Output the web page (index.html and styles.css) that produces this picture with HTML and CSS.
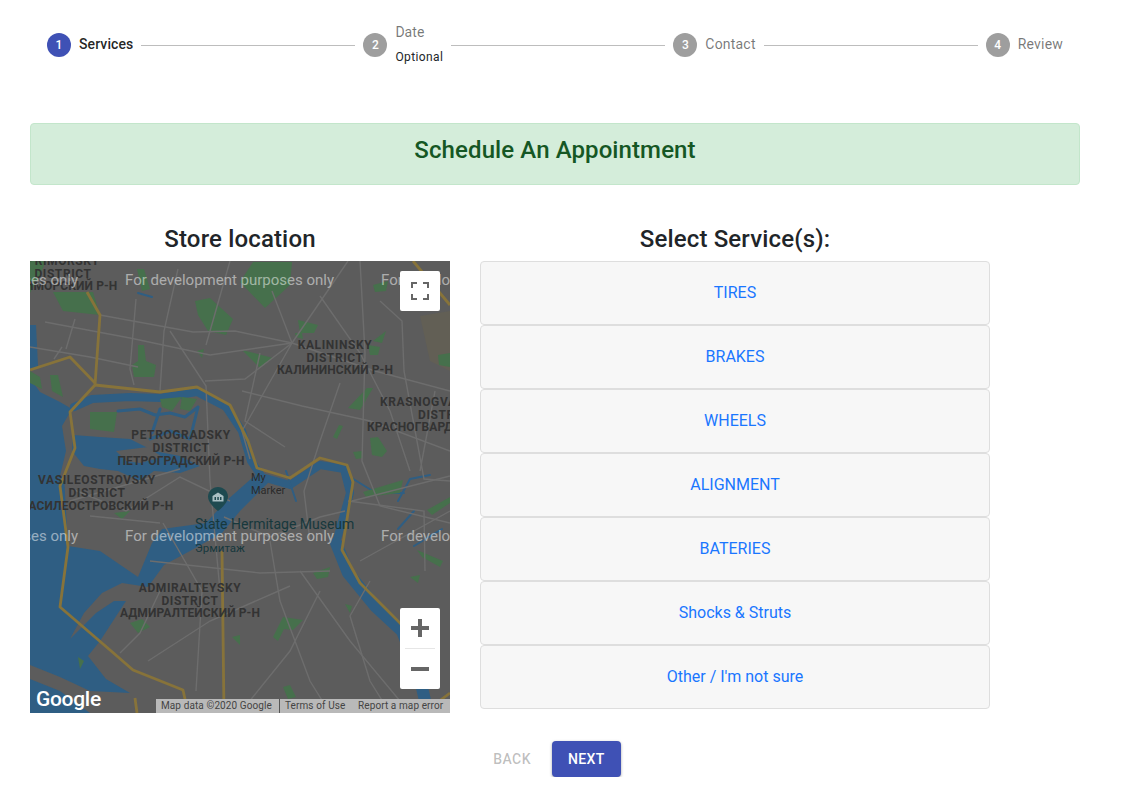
FILE: index.html
```html
<!DOCTYPE html>
<html lang="en">
<head>
<meta charset="utf-8">
<title>Schedule An Appointment</title>
<link rel="stylesheet" href="styles.css">
</head>
<body>
<main class="page">
  <nav class="stepper">
    <div class="step"><span class="step-num active">1</span><span class="step-label current">Services</span></div>
    <div class="connector"></div>
    <div class="step"><span class="step-num">2</span><span class="step-stack"><span class="step-label">Date</span><span class="step-caption">Optional</span></span></div>
    <div class="connector"></div>
    <div class="step"><span class="step-num">3</span><span class="step-label">Contact</span></div>
    <div class="connector"></div>
    <div class="step"><span class="step-num">4</span><span class="step-label">Review</span></div>
  </nav>

  <div class="content">
    <div class="banner"><h1 class="banner-title">Schedule An Appointment</h1></div>

    <div class="columns">
      <section class="col-map">
        <h2 class="col-title">Store location</h2>
        <div class="map">
          <svg class="map-svg" viewBox="0 0 420 452" width="420" height="452" xmlns="http://www.w3.org/2000/svg">
            <rect width="420" height="452" fill="#5c5c5c"/>
            <path d="M390 55L420 50 420 110 400 100Z" fill="#625f55"/>
            <!-- water -->
            <g fill="#2f5e83">
              <path d="M0 64L6 64 8 105 0 110Z"/>
              <path d="M0 117L10 131 30 141 42 148 32 165 36 190 30 215 0 215Z"/>
              <path d="M0 215H34L38 285 70 290 108 316 122 282 132 268 176 262 196 240 230 210 238 222 210 250 192 272 160 290 134 304 118 326 92 322 72 332 54 352 40 378 66 352 84 340 96 340 70 380 58 395 76 418 100 432 60 430 30 416 0 404Z"/>
              <path d="M43 174L70 176 100 178 124 190 150 195 170 205 150 212 124 210 110 220 88 210 70 208 54 205 42 190Z"/>
              <path d="M0 418L30 430 60 452H0Z"/>
            </g>
            <g fill="none" stroke="#2f5e83" stroke-linejoin="round" stroke-linecap="round">
              <path stroke-width="8" d="M44 146L62 138 100 136 130 137 167 131 196 146"/>
              <path stroke-width="8" d="M196 146L212 170 221 200 232 216 260 224 290 204 314 208 320 232 306 282"/>
              <path stroke-width="12" d="M306 282L318 312 345 345 372 370 388 410 398 452"/>
              <path stroke-width="3" d="M88 150L110 148 125 154 140 152 155 156 168 146M130 148L122 172M168 146L160 178 140 170 120 178"/>
              <path stroke-width="2" d="M50 42L66 48M108 32L122 36M320 216L346 232 374 232M368 240L380 218 400 214M368 268L384 250M384 285L412 268M256 210L266 240"/>
            </g>
            <path d="M86 190L118 186 132 196 110 202 96 200Z" fill="#5c5c5c"/>
            <!-- parks -->
            <g fill="#46704c">
              <path d="M0 0H16L8 18 0 32Z"/>
              <path d="M23 31L63 31 70 54 33 50Z"/>
              <path d="M107 8L114 8 120 28 112 30Z"/>
              <path d="M165 40L180 37 203 58 196 74 178 70 168 54Z"/>
              <path d="M108 84L114 84 116 100 126 104 124 116 104 116 102 104 108 100Z"/>
              <path d="M167 90L174 88 172 97Z"/>
              <path d="M0 110L10 116 12 128 0 122Z"/>
              <path d="M20 114L28 114 33 136 22 130Z"/>
              <path d="M60 151L87 151 84 171 60 168Z"/>
              <path d="M130 138L152 136 142 150 132 146Z"/>
              <path d="M152 136L167 138 160 150 150 148Z"/>
              <path d="M223 1L262 1 260 24 235 47 210 21Z"/>
              <path d="M268 59L288 64 284 72 270 72Z"/>
              <path d="M265 72L272 72 273 78 266 76Z"/>
              <path d="M212 89L243 97 230 107Z"/>
              <path d="M338 84L350 86 348 94 340 94Z"/>
              <path d="M343 80L356 70 352 82Z"/>
              <path d="M318 147L337 127 343 127 330 149Z"/>
              <path d="M303 176L309 164 313 165 307 178Z"/>
              <path d="M340 177L348 176 357 190 352 196 342 194Z"/>
              <path d="M323 191L332 190 333 197 326 198Z"/>
              <path d="M408 94L420 92 420 106 409 104Z"/>
              <path d="M343 24L358 20 356 30 345 31Z"/>
              <path d="M333 231L373 219 370 232 336 236Z"/>
              <path d="M397 249L420 236 420 242 402 254Z"/>
              <path d="M387 289L413 300 410 306 392 296Z"/>
              <path d="M380 316L390 314 388 322Z"/>
              <path d="M243 376L253 356 273 359 263 369 254 368 248 380Z"/>
              <path d="M283 312L300 306 298 316 287 318Z"/>
              <path d="M315 343L322 345 320 352Z"/>
              <path d="M253 426L260 424 266 436 258 438Z"/>
              <path d="M100 362L112 358 120 366 108 372Z"/>
              <path d="M202 376L210 374 210 384Z"/>
              <path d="M84 252L100 250 92 258Z"/>
              <path d="M160 442L166 446 160 452Z"/>
              <path d="M48 396L54 400 50 408Z"/>
            </g>
            <!-- roads -->
            <g fill="none" stroke="#6d6d6d" stroke-width="1.400">
              <path d="M70 54L163 71 205 70 262 82 345 110 420 130"/>
              <path d="M15 61L100 77 180 94 262 82"/>
              <path d="M0 86L60 96 108 106M32 86L24 98"/>
              <path d="M45 58L36 88M106 38L100 108 104 124M148 8L134 70 130 130"/>
              <path d="M140 70L176 125 180 220 190 330"/>
              <path d="M200 0L176 84M262 82L318 0M242 30L262 82 215 118 175 120"/>
              <path d="M262 82L212 170 220 198M290 35L330 92 360 150 380 210"/>
              <path d="M310 122L290 180 274 230 280 280"/>
              <path d="M330 0L335 92 332 200 350 245 420 262"/>
              <path d="M212 130L272 145 340 160 420 190M230 92L215 160 255 186"/>
              <path d="M350 40L372 60 374 110 394 218 420 220M405 130L390 210"/>
              <path d="M322 240L420 215M318 240L394 250 395 310M330 300L420 250"/>
              <path d="M194 256L240 276 290 256 315 250M120 300L230 312 300 310"/>
              <path d="M240 280L250 340 280 420 300 452M270 310L320 380 380 452M290 330L260 390 210 452"/>
              <path d="M42 228L96 250 150 216 200 240M40 240L150 208M60 255L130 262"/>
              <path d="M130 330L110 372 90 392M118 400L180 360 260 325M340 320L320 355 340 420 360 452"/>
              <path d="M133 262L172 330 166 430"/>
            </g>
            <!-- highways -->
            <g fill="none" stroke="#87733a" stroke-width="2.800" stroke-linejoin="round">
              <path d="M57 31L70 54 65 124 40 151 45 187 30 225 38 286 30 346 80 389 103 409 153 429 158 452"/>
              <path d="M0 109L40 96 65 122"/>
              <path d="M65 124L130 131 167 126 200 144 218 180 227 207 260 217 290 197 317 204 323 221 312 289 330 322 370 362 395 395"/>
              <path d="M383 0L420 44M105 437L107 452M393 452L420 432"/>
              <path d="M192 290L194 452"/>
            </g>
            <g class="map-label">
              <text x="33" y="4">PRIMORSKY</text><text x="33" y="17">DISTRICT</text><text x="33" y="29" class="cy">ПРИМОРСКИЙ Р-Н</text>
              <text x="305" y="88">KALININSKY</text><text x="305" y="101">DISTRICT</text><text x="305" y="113" class="cy">КАЛИНИНСКИЙ Р-Н</text>
              <text x="350" y="145" class="label-start">KRASNOGVARDEYSKY</text>
              <text x="388" y="158" class="label-start">DISTRICT</text>
              <text x="337" y="170" class="label-start cy">КРАСНОГВАРДЕЙСКИЙ Р-Н</text>
              <text x="151" y="178">PETROGRADSKY</text><text x="151" y="191">DISTRICT</text><text x="151" y="204" class="cy">ПЕТРОГРАДСКИЙ Р-Н</text>
              <text x="67" y="223">VASILEOSTROVSKY</text><text x="67" y="236">DISTRICT</text><text x="67" y="249" class="cy">ВАСИЛЕОСТРОВСКИЙ Р-Н</text>
              <text x="160" y="331">ADMIRALTEYSKY</text><text x="160" y="344">DISTRICT</text><text x="160" y="356" class="cy">АДМИРАЛТЕЙСКИЙ Р-Н</text>
            </g>
            <g class="map-poi">
              <text x="221" y="220">My</text><text x="221" y="233">Marker</text>
            </g>
            <g class="map-museum">
              <text x="165" y="268" class="museum-main">State Hermitage Museum</text>
              <text x="165" y="291">Эрмитаж</text>
            </g>
            <path d="M188 226c-5.500 0-10 4.300-10 9.700 0 6.800 10 14.300 10 14.300s10-7.500 10-14.300c0-5.400-4.500-9.700-10-9.700z" fill="#1e4a50"/>
            <path d="M182.500 235l5.500-3.500 5.500 3.500v5.500h-11zM184.500 236v3h1.500v-3zM187.300 236v3h1.500v-3zM190 236v3h1.500v-3z" fill="#a9c0c4" fill-rule="evenodd"/>
            <g class="map-dev">
              <text x="-161" y="24">For development purposes only</text><text x="95" y="24">For development purposes only</text><text x="351" y="24">For development purposes only</text>
              <text x="-161" y="280">For development purposes only</text><text x="95" y="280">For development purposes only</text><text x="351" y="280">For development purposes only</text>
            </g>
          </svg>

          <button class="map-ctl map-full" type="button" aria-label="Toggle fullscreen view">
            <svg viewBox="0 0 18 18" width="18" height="18"><path d="M0 6V0h6v2H2v4zM12 0h6v6h-2V2h-4zM18 12v6h-6v-2h4v-4zM6 18H0v-6h2v4h4z" fill="#666"/></svg>
          </button>
          <div class="map-ctl map-zoom">
            <button class="zoom-btn" type="button" aria-label="Zoom in"><svg viewBox="0 0 18 18" width="18" height="18"><path d="M7 0h4v7h7v4h-7v7H7v-7H0V7h7z" fill="#666"/></svg></button>
            <span class="zoom-sep"></span>
            <button class="zoom-btn" type="button" aria-label="Zoom out"><svg viewBox="0 0 18 18" width="18" height="18"><path d="M0 7h18v4H0z" fill="#666"/></svg></button>
          </div>
          <span class="map-logo">Google</span>
          <div class="map-attr"><span class="attr-data">Map data ©2020 Google</span><span class="attr-terms">Terms of Use</span><span class="attr-report">Report a map error</span></div>
        </div>
      </section>

      <section class="col-services">
        <h2 class="col-title">Select Service(s):</h2>
        <div class="service-list">
          <button class="service" type="button">TIRES</button>
          <button class="service" type="button">BRAKES</button>
          <button class="service" type="button">WHEELS</button>
          <button class="service" type="button">ALIGNMENT</button>
          <button class="service" type="button">BATERIES</button>
          <button class="service" type="button">Shocks &amp; Struts</button>
          <button class="service" type="button">Other / I'm not sure</button>
        </div>
      </section>
    </div>

    <div class="actions">
      <button class="btn btn-back" type="button" disabled>Back</button>
      <button class="btn btn-next" type="button">Next</button>
    </div>
  </div>
</main>
</body>
</html>
```

FILE: styles.css
```css
* { box-sizing: border-box; }
html, body { margin: 0; padding: 0; background: #fff; }
body { font-family: Roboto, "Liberation Sans", sans-serif; color: #212529; }

.page { width: 1127px; padding: 0 32px 0 15px; }

.stepper { display: flex; align-items: center; padding: 22px 24px 0; height: 67px; }
.step { display: flex; align-items: center; padding: 0 8px; flex: none; }
.connector { flex: 1 1 auto; height: 1px; background: #bdbdbd; margin-top: 1px; }
.step-num {
  width: 24px; height: 24px; border-radius: 50%; background: #9e9e9e; color: #fff;
  font-size: 12px; font-weight: 500; line-height: 24px; text-align: center; margin-right: 8px; flex: none;
}
.step-num.active { background: #3f51b5; }
.step-label { font-size: 14px; line-height: 20px; color: rgba(0,0,0,.54); display: block; margin-top: -2px; letter-spacing: .2px; }
.step-label.current { color: rgba(0,0,0,.87); font-weight: 500; letter-spacing: .1px; }
.step-stack { display: block; }
.step-stack .step-label { margin-top: 0; letter-spacing: .05px; }
.step-caption { display: block; font-size: 12px; line-height: 20px; margin-top: 5px; color: #212529; letter-spacing: .4px; }

.content { padding: 56px 15px 0; }

.banner {
  height: 62px; background: #d4edda; border: 1px solid #c3e6cb; border-radius: 4px;
  padding-top: 12px; text-align: center;
}
.banner-title { margin: 0; font-size: 24px; line-height: 29px; font-weight: 500; color: #155724; letter-spacing: .1px; }

.columns { display: flex; gap: 30px; margin-top: 39px; align-items: flex-start; }
.col-map { width: 420px; flex: none; }
.col-services { width: 510px; flex: none; }
.col-title { margin: 0 0 7px; padding-top: 1px; font-size: 24px; line-height: 29px; font-weight: 500; text-align: center; color: #212529; letter-spacing: .15px; }

.map { position: relative; width: 420px; height: 452px; overflow: hidden; }
.map-svg { display: block; }
.map-label text { font: 700 12px Roboto, sans-serif; fill: #333; text-anchor: middle; letter-spacing: .6px; }
.map-label .label-start { text-anchor: start; }
.map-label .cy { letter-spacing: .1px; }
.map-poi text { font: 400 11px Roboto, sans-serif; fill: #2b2b2b; }
.map-museum text { font: 400 11.5px Roboto, sans-serif; fill: #17383c; }
.map-museum .museum-main { font-size: 14px; }
.map-dev text { font: 400 15px Roboto, sans-serif; fill: rgba(255,255,255,.5); }

.map-ctl { position: absolute; right: 10px; background: #fff; border: 0; padding: 0; border-radius: 2px; }
.map-full { top: 10px; width: 40px; height: 40px; display: flex; align-items: center; justify-content: center; }
.map-zoom { top: 347px; width: 40px; height: 81px; display: flex; flex-direction: column; align-items: center; }
.zoom-btn { width: 40px; height: 40px; border: 0; padding: 0; background: none; display: flex; align-items: center; justify-content: center; }
.zoom-sep { width: 30px; height: 1px; background: #e6e6e6; flex: none; }

.map-logo {
  position: absolute; left: 6px; bottom: 2px; color: #fff; font-family: Roboto, sans-serif;
  font-size: 21px; line-height: 24px; font-weight: 500; letter-spacing: -.3px;
}
.map-attr {
  position: absolute; right: 0; bottom: 0; width: 294px; height: 14px; background: #b9b9b9;
  display: flex; align-items: center; font-size: 10px; line-height: 14px; color: #444; white-space: nowrap; letter-spacing: .1px;
}
.attr-data { width: 123px; padding-left: 5px; flex: none; }
.attr-terms { width: 79px; padding-left: 5px; border-left: 1px solid #555; flex: none; height: 14px; }
.attr-report { flex: none; }

.service-list { display: flex; flex-direction: column; }
.service {
  height: 64px; width: 100%; background: #f7f7f7; border: 1px solid #dedede; border-radius: 4px;
  color: #1a76ff; font: 400 16px/24px Roboto, sans-serif; text-align: center; padding: 0;
}

.actions { display: flex; justify-content: center; margin-top: 28px; }
.btn {
  height: 36px; min-width: 64px; padding: 0 16px; border: 0; border-radius: 4px;
  font: 500 14px/36px Roboto, sans-serif; letter-spacing: .4px; text-transform: uppercase;
}
.btn-back { background: none; color: rgba(0,0,0,.26); margin-right: 5px; }
.btn-next { background: #3f51b5; color: #fff; margin-right: 12px; box-shadow: 0 1px 3px rgba(0,0,0,.35); }
```
